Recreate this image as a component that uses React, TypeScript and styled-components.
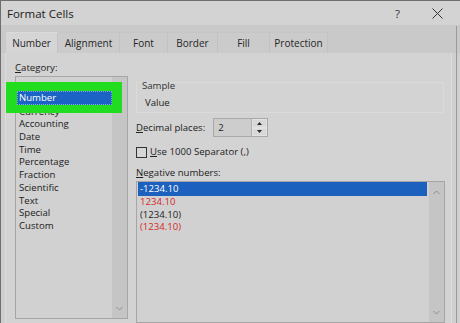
import React from 'react';
import styled, { createGlobalStyle } from 'styled-components';

const GlobalStyle = createGlobalStyle`
  html, body {
    margin: 0;
    padding: 0;
    background: #cfcfcf;
  }
  body {
    font-family: "Open Sans", "Noto Sans", "Liberation Sans", sans-serif;
    color: #1e1e1e;
  }
`;

const tabs = ['Number', 'Alignment', 'Font', 'Border', 'Fill', 'Protection'];
const tabWidths = [52, 62, 48, 50, 52, 58];

const categories = [
  'Number',
  'Currency',
  'Accounting',
  'Date',
  'Time',
  'Percentage',
  'Fraction',
  'Scientific',
  'Text',
  'Special',
  'Custom',
];

const negatives = [
  { label: '-1234.10', red: false },
  { label: '1234.10', red: true },
  { label: '(1234.10)', red: false },
  { label: '(1234.10)', red: true },
];

function Chevron({ up }: { up?: boolean }) {
  return (
    <svg width="7" height="5" viewBox="0 0 7 5">
      <polyline
        points={up ? '0.5,4 3.5,1 6.5,4' : '0.5,1 3.5,4 6.5,1'}
        fill="none"
        stroke="#8c8c8c"
        strokeWidth="1"
      />
    </svg>
  );
}

function Triangle({ up }: { up?: boolean }) {
  return (
    <svg width="5" height="3" viewBox="0 0 5 3">
      <polygon points={up ? '0,3 2.5,0 5,3' : '0,0 2.5,3 5,0'} fill="#2a2a2a" />
    </svg>
  );
}

export default function App() {
  return (
    <>
      <GlobalStyle />
      <Window>
        <TitleBar>
          <Title>Format Cells</Title>
          <HelpButton>?</HelpButton>
          <CloseButton>
            <svg width="11" height="11" viewBox="0 0 11 11">
              <path d="M0.5 0.5 L10.5 10.5 M10.5 0.5 L0.5 10.5" stroke="#333" strokeWidth="1" />
            </svg>
          </CloseButton>
        </TitleBar>

        <TabStrip>
          {tabs.map((t, i) => (
            <Tab key={t} $active={i === 0} $width={tabWidths[i]}>
              {t}
            </Tab>
          ))}
        </TabStrip>

        <Panel>
          <Highlight />
          <LeftColumn>
            <FieldLabel>
              <u>C</u>ategory:
            </FieldLabel>
            <ListBox $height={243}>
              <ListItems $pad={16}>
                {categories.map((c) => (
                  <CategoryItem key={c}>{c}</CategoryItem>
                ))}
              </ListItems>
              <ScrollBar>
                <span />
                <Chevron />
              </ScrollBar>
            </ListBox>
          </LeftColumn>

          <RightColumn>
            <SampleGroup>
              <GroupLabel>Sample</GroupLabel>
              <SampleValue>Value</SampleValue>
            </SampleGroup>

            <DecimalRow>
              <FieldLabel>
                <u>D</u>ecimal places:
              </FieldLabel>
              <SpinBox>
                <SpinValue>2</SpinValue>
                <SpinButtons>
                  <SpinButton>
                    <Triangle up />
                  </SpinButton>
                  <SpinButton>
                    <Triangle />
                  </SpinButton>
                </SpinButtons>
              </SpinBox>
            </DecimalRow>

            <CheckRow>
              <CheckBox />
              <FieldLabel>
                <u>U</u>se 1000 Separator (,)
              </FieldLabel>
            </CheckRow>

            <NegLabel>
              <u>N</u>egative numbers:
            </NegLabel>
            <ListBox $height={142}>
              <ListItems $pad={0}>
                {negatives.map((n, i) => (
                  <NegItem key={i} $selected={i === 0} $red={n.red}>
                    {n.label}
                  </NegItem>
                ))}
              </ListItems>
              <ScrollBar>
                <Chevron up />
                <Chevron />
              </ScrollBar>
            </ListBox>
          </RightColumn>
        </Panel>
      </Window>
    </>
  );
}

const Window = styled.div`
  width: 460px;
  height: 323px;
  box-sizing: border-box;
  display: flex;
  flex-direction: column;
  background: #cfcfcf;
  border-top: 1px solid #6e6e6e;
  border-left: 1px solid #6e6e6e;
  overflow: hidden;
  position: relative;

  &::after {
    content: '';
    position: absolute;
    top: 25px;
    bottom: 0;
    right: 3px;
    width: 1px;
    background: #9a9a9a;
  }
`;

const TitleBar = styled.div`
  height: 24px;
  display: flex;
  align-items: center;
  padding-left: 6px;
  background: #d3d3d3;
`;

const Title = styled.div`
  flex: 1;
  font-size: 11.5px;
  color: #202020;
`;

const HelpButton = styled.div`
  width: 12px;
  font-size: 11.5px;
  color: #333;
  margin-right: 25px;
`;

const CloseButton = styled.div`
  display: flex;
  align-items: center;
  margin-right: 17px;
`;

const TabStrip = styled.div`
  height: 28px;
  display: flex;
  align-items: flex-end;
  padding-left: 5px;
  background: #c9c9c9;
`;

const Tab = styled.div<{ $active?: boolean; $width: number }>`
  width: ${(p) => p.$width}px;
  height: 21px;
  box-sizing: border-box;
  display: flex;
  align-items: center;
  justify-content: center;
  font-size: 10px;
  color: #262626;
  background: ${(p) => (p.$active ? '#d5d5d5' : '#cbcbcb')};
  border-right: 1px solid ${(p) => (p.$active ? '#c4c4c4' : '#c2c2c2')};
  border-top: 1px solid ${(p) => (p.$active ? '#dadada' : '#c6c6c6')};
`;

const Panel = styled.div`
  position: relative;
  flex: 1;
  margin: 0 8px 0 4px;
  padding: 8px 6px 0 9px;
  display: flex;
  gap: 8px;
  background: #d3d3d3;
  border-left: 1px solid #dcdcdc;
  border-right: 1px solid #dcdcdc;
`;

/* green annotation box drawn over the selected category */
const Highlight = styled.div`
  position: absolute;
  left: 0;
  top: 29px;
  width: 116px;
  height: 31px;
  background: #22dc1f;
  z-index: 1;

  &::after {
    content: 'Number';
    position: absolute;
    left: 11px;
    top: 9px;
    width: 95px;
    height: 14px;
    box-sizing: border-box;
    padding-left: 1px;
    background: #1b63c4;
    border: 1px dotted #7fa8e0;
    color: #ffffff;
    font-size: 9.6px;
    line-height: 12px;
  }
`;

const LeftColumn = styled.div`
  width: 113px;
  display: flex;
  flex-direction: column;
`;

const RightColumn = styled.div`
  flex: 1;
  display: flex;
  flex-direction: column;
  padding-top: 21px;
`;

const FieldLabel = styled.div`
  font-size: 9.6px;
  line-height: 14px;
  color: #222;
  white-space: nowrap;

  u {
    text-decoration-thickness: 1px;
    text-underline-offset: 1px;
  }
`;

const ListBox = styled.div<{ $height: number }>`
  height: ${(p) => p.$height}px;
  box-sizing: border-box;
  display: flex;
  background: #d1d1d1;
  border: 1px solid #a6a6a6;
  margin-top: 1px;
`;

const ListItems = styled.div<{ $pad: number }>`
  flex: 1;
  padding-top: ${(p) => p.$pad}px;
  padding-left: 1px;
  padding-right: 2px;
`;

const CategoryItem = styled.div`
  height: 12.7px;
  line-height: 12.7px;
  padding-left: 2px;
  font-size: 9.6px;
  color: #202020;
`;

const NegItem = styled.div<{ $selected?: boolean; $red?: boolean }>`
  height: ${(p) => (p.$selected ? 14 : 12.5)}px;
  line-height: ${(p) => (p.$selected ? 14 : 12.5)}px;
  padding-left: 2px;
  font-size: 9.6px;
  color: ${(p) => (p.$selected ? '#ffffff' : p.$red ? '#d42a2a' : '#1e1e1e')};
  background: ${(p) => (p.$selected ? '#1c61bd' : 'transparent')};
`;

const ScrollBar = styled.div`
  width: 15px;
  display: flex;
  flex-direction: column;
  justify-content: space-between;
  align-items: center;
  padding: 8px 0 7px;
  box-sizing: border-box;
  background: #c5c5c5;
`;

const SampleGroup = styled.div`
  height: 31px;
  box-sizing: border-box;
  border: 1px solid #dadada;
  margin-right: 1px;
  padding: 0 0 0 5px;
`;

const GroupLabel = styled.div`
  font-size: 9.6px;
  line-height: 12px;
  margin-top: -3px;
  color: #333;
`;

const SampleValue = styled.div`
  font-size: 9.6px;
  line-height: 14px;
  margin-top: 4px;
  padding-left: 3px;
  color: #222;
`;

const DecimalRow = styled.div`
  display: flex;
  align-items: center;
  gap: 8px;
  margin-top: 5px;
`;

const SpinBox = styled.div`
  width: 55px;
  height: 19px;
  box-sizing: border-box;
  display: flex;
  border: 1px solid #a9a9a9;
  background: #cdcdcd;
`;

const SpinValue = styled.div`
  flex: 1;
  font-size: 9.6px;
  line-height: 17px;
  padding-left: 4px;
  border-right: 1px solid #b0b0b0;
`;

const SpinButtons = styled.div`
  width: 15px;
  display: flex;
  flex-direction: column;
`;

const SpinButton = styled.div`
  flex: 1;
  display: flex;
  align-items: center;
  justify-content: center;
  background: #d8d8d8;
  border: 1px solid #e2e2e2;
`;

const CheckRow = styled.div`
  display: flex;
  align-items: center;
  gap: 3px;
  margin-top: 8px;
`;

const CheckBox = styled.div`
  width: 11px;
  height: 11px;
  box-sizing: border-box;
  border: 1px solid #333;
  background: #d6d6d6;
`;

const NegLabel = styled(FieldLabel)`
  margin-top: 7px;
`;
